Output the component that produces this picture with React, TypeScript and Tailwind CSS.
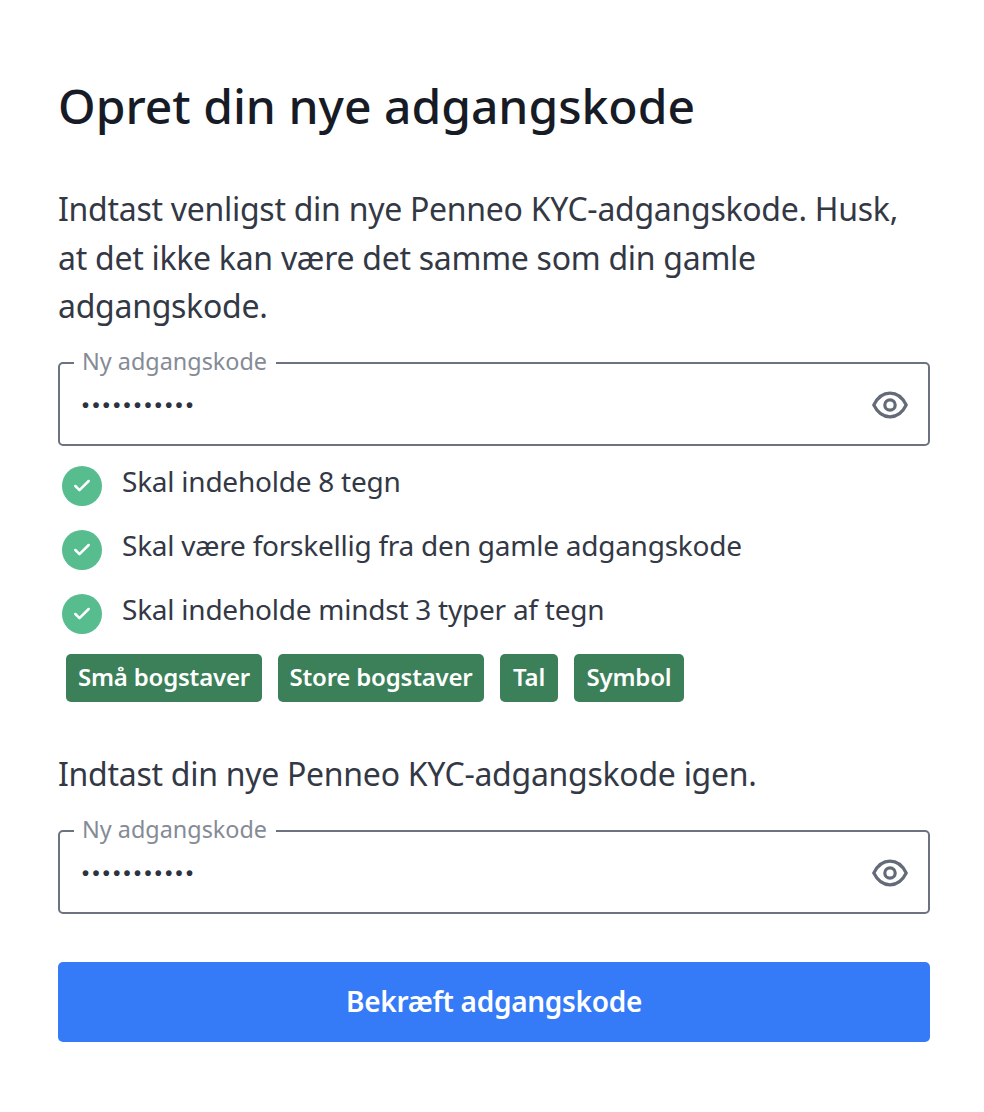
import { Check } from "lucide-react";

const rules = [
  "Skal indeholde 8 tegn",
  "Skal være forskellig fra den gamle adgangskode",
  "Skal indeholde mindst 3 typer af tegn",
];

const tags = [
  { label: "Små bogstaver", width: "w-[196px]" },
  { label: "Store bogstaver", width: "w-[206px]" },
  { label: "Tal", width: "w-[58px]" },
  { label: "Symbol", width: "w-[110px]" },
];

const EyeIcon = () => (
  <svg width="36" height="28" viewBox="0 0 36 28" fill="none" stroke="#646b78" strokeWidth="3.2">
    <path d="M1.8 14C5.5 6.5 11.5 2.2 18 2.2S30.5 6.5 34.2 14C30.5 21.5 24.5 25.8 18 25.8S5.5 21.5 1.8 14Z" />
    <circle cx="18" cy="14" r="5.2" />
  </svg>
);

const PasswordField = () => (
  <fieldset className="h-[95px] rounded-[5px] border-2 border-[#6b7280] pl-[22px] pr-[20px] flex items-center">
    <legend className="-ml-[8px] pl-[8px] pr-[9px] pb-[4px] text-[23.4px] leading-[20px] text-[#858b96]">
      Ny adgangskode
    </legend>
    <div className="flex items-center justify-between w-full -mt-[8px]">
      <span className="text-[#2b3342] text-[20px] leading-[24px] tracking-[3.4px] font-['Liberation_Sans',sans-serif] font-bold">
        •••••••••••
      </span>
      <EyeIcon />
    </div>
  </fieldset>
);

export default function App() {
  return (
    <div className="min-h-[1112px] bg-white pl-[58px] pr-[54px] pt-[76px] font-['Noto_Sans',sans-serif]">
      <h1 className="text-[48px] leading-[60px] font-medium text-[#171b26]">
        Opret din nye adgangskode
      </h1>
      <p className="mt-[49px] text-[32px] leading-[48.5px] tracking-[-0.28px] text-[#333845]">
        Indtast venligst din nye Penneo KYC-adgangskode. Husk, at det ikke kan være det samme som din gamle adgangskode.
      </p>
      <div className="mt-[20px]">
        <PasswordField />
      </div>
      <ul className="mt-[20px] flex flex-col gap-[24px] pl-[4px]">
        {rules.map((rule) => (
          <li key={rule} className="flex items-start gap-[20px] h-[40px]">
            <span className="w-[40px] h-[40px] rounded-full bg-[#57bd8e] flex items-center justify-center">
              <Check className="w-[20px] h-[20px] text-white" strokeWidth={3} />
            </span>
            <span className="text-[28px] leading-[30px] tracking-[-0.24px] text-[#333845]">{rule}</span>
          </li>
        ))}
      </ul>
      <div className="mt-[20px] ml-[8px] flex gap-[16px]">
        {tags.map((tag) => (
          <span
            key={tag.label}
            className={`${tag.width} h-[48px] rounded-[5px] bg-[#3b8058] text-white text-center text-[24px] leading-[46px] font-semibold tracking-[-0.2px]`}
          >
            {tag.label}
          </span>
        ))}
      </div>
      <p className="mt-[48px] text-[32px] leading-[48px] tracking-[-0.28px] text-[#333845]">
        Indtast din nye Penneo KYC-adgangskode igen.
      </p>
      <div className="mt-[21px]">
        <PasswordField />
      </div>
      <button className="mt-[48px] w-full h-[80px] pb-[2px] rounded-[5px] bg-[#357af6] text-white text-[28px] tracking-[-0.3px] font-semibold">
        Bekræft adgangskode
      </button>
    </div>
  );
}
